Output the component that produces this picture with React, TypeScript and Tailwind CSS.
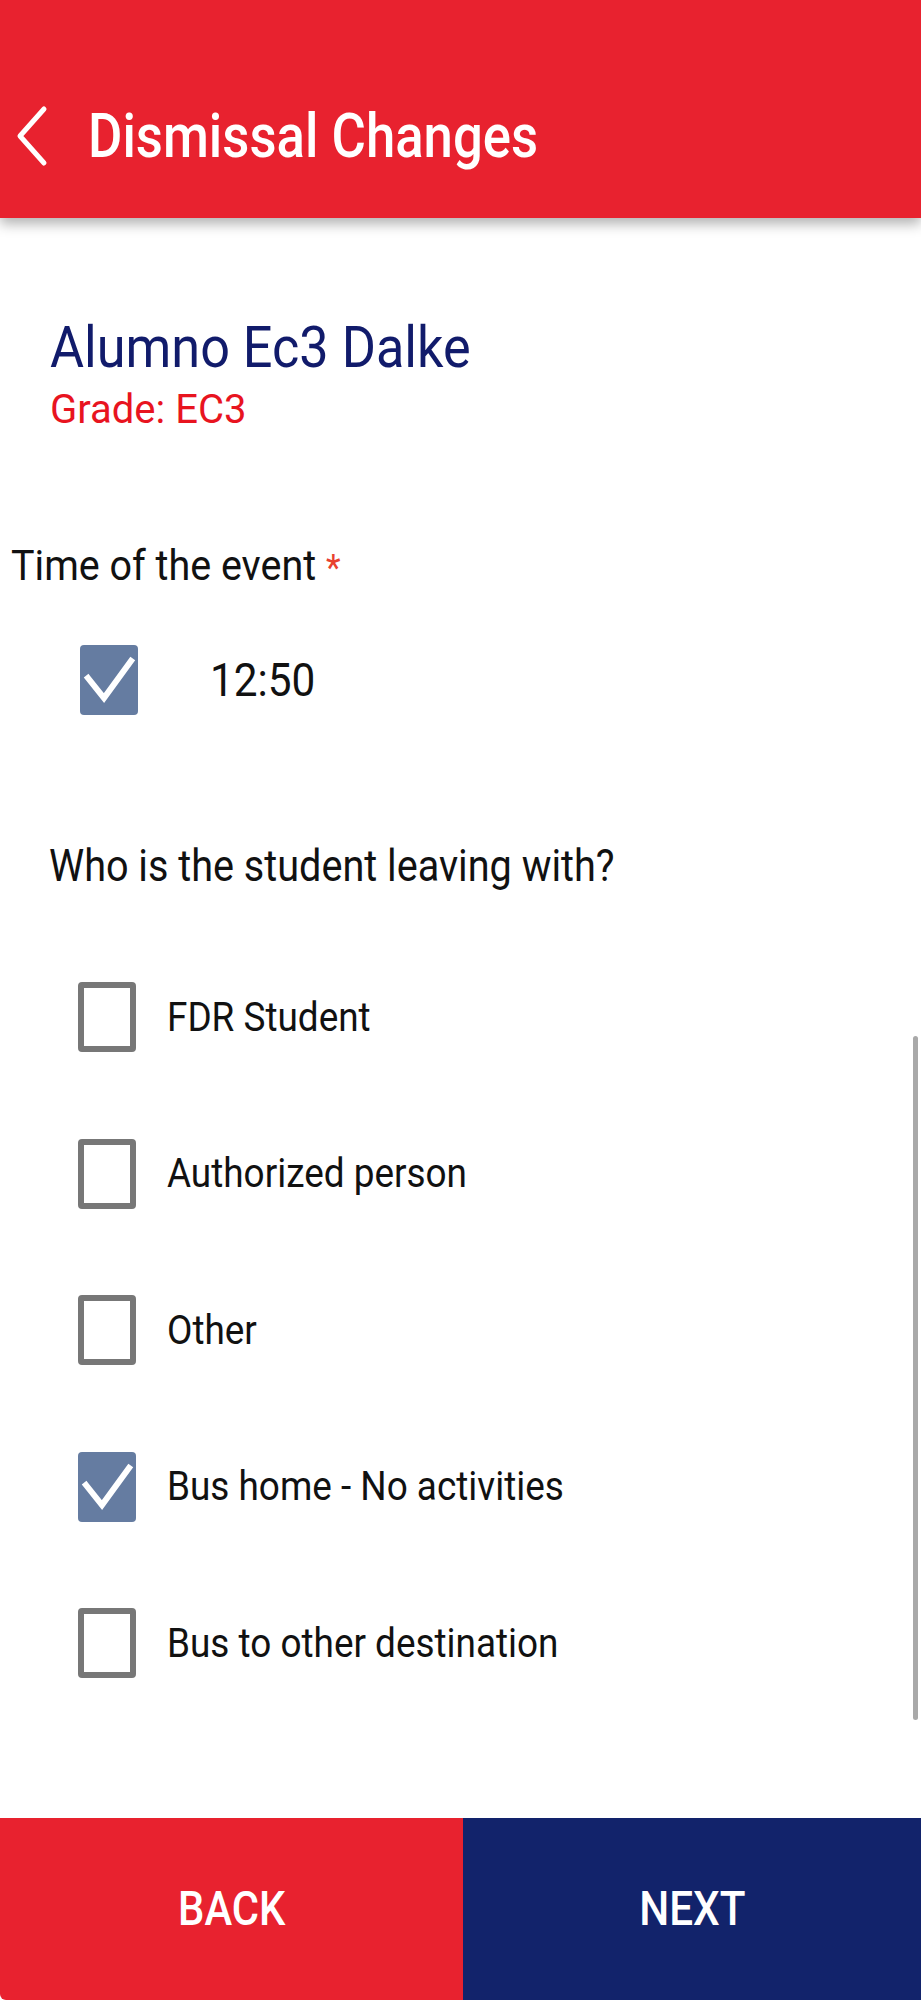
import React from "react";

const font = { fontFamily: "Roboto, 'Noto Sans', Arial, sans-serif" };

function Check() {
  return (
    <svg width="58" height="70" viewBox="0 0 58 70" className="block">
      <polyline points="8,33 24,53 51,16" fill="none" stroke="#ffffff" strokeWidth="6" strokeLinecap="square" strokeLinejoin="miter" />
    </svg>
  );
}

function Box({ checked }: { checked: boolean }) {
  if (checked) {
    return (
      <div className="w-[58px] h-[70px] rounded-[4px] bg-[#657ca1] shrink-0">
        <Check />
      </div>
    );
  }
  return <div className="w-[58px] h-[70px] rounded-[4px] border-[6px] border-[#777777] bg-white shrink-0" />;
}

const options = [
  { label: "FDR Student", checked: false },
  { label: "Authorized person", checked: false },
  { label: "Other", checked: false },
  { label: "Bus home - No activities", checked: true },
  { label: "Bus to other destination", checked: false },
];

export default function App() {
  return (
    <div className="relative w-[921px] h-[2000px] flex flex-col bg-white overflow-hidden" style={font}>
      <header className="relative z-10 h-[218px] shrink-0 bg-[#e8222f] pt-[105px] shadow-[0_6px_12px_rgba(0,0,0,0.3)]">
        <div className="h-[62px] flex items-center">
          <svg width="32" height="62" viewBox="0 0 32 62" className="ml-[16px] shrink-0">
            <polyline points="28,4 4,31 28,58" fill="none" stroke="#ffffff" strokeWidth="5" strokeLinecap="round" strokeLinejoin="round" />
          </svg>
          <h1 className="ml-[40px] text-[62px] leading-[62px] font-medium text-white whitespace-nowrap inline-block origin-left scale-x-[0.85]">
            Dismissal Changes
          </h1>
        </div>
      </header>

      <main className="flex-1 flex flex-col">
        <div className="pl-[50px] pt-[100px] flex flex-col items-start">
          <div className="text-[58px] leading-[58px] text-[#111b6b] whitespace-nowrap origin-left scale-x-[0.9]">Alumno Ec3 Dalke</div>
          <div className="mt-[14px] text-[40px] leading-[40px] text-[#e8141f]">Grade: EC3</div>
        </div>

        <div className="mt-[115px] pl-[11px] flex items-start">
          <div className="text-[42px] leading-[42px] text-[#111111] whitespace-nowrap origin-left scale-x-[0.94]">
            Time of the event <span className="text-[#e8412f] text-[36px]">*</span>
          </div>
        </div>

        <div className="mt-[56px] pl-[80px] flex items-center">
          <Box checked={true} />
          <span className="ml-[72px] inline-block text-[46px] leading-[46px] text-[#111111] origin-left scale-x-[0.92]">12:50</span>
        </div>

        <div className="mt-[129px] pl-[49px] flex items-start">
          <div className="text-[44px] leading-[44px] text-[#111111] whitespace-nowrap origin-left scale-x-[0.9]">
            Who is the student leaving with?
          </div>
        </div>

        <div className="mt-[94px] pl-[78px] flex flex-col gap-[86.5px]">
          {options.map((o) => (
            <div key={o.label} className="h-[70px] flex items-center">
              <Box checked={o.checked} />
              <span className="ml-[31px] inline-block whitespace-nowrap text-[41px] leading-[41px] text-[#111111] origin-left scale-x-[0.9]">
                {o.label}
              </span>
            </div>
          ))}
        </div>
      </main>

      <footer className="h-[182px] shrink-0 flex">
        <button className="w-[463px] h-full bg-[#e8222f] rounded-bl-[6px] flex items-center justify-center text-white">
          <span className="inline-block text-[48px] font-medium scale-x-[0.87]">BACK</span>
        </button>
        <button className="flex-1 h-full bg-[#12236b] flex items-center justify-center text-white">
          <span className="inline-block text-[48px] font-medium scale-x-[0.88]">NEXT</span>
        </button>
      </footer>

      <div className="absolute right-[3px] top-[1036px] w-[5px] h-[684px] rounded-full bg-[#a9a9a9]" />
    </div>
  );
}
